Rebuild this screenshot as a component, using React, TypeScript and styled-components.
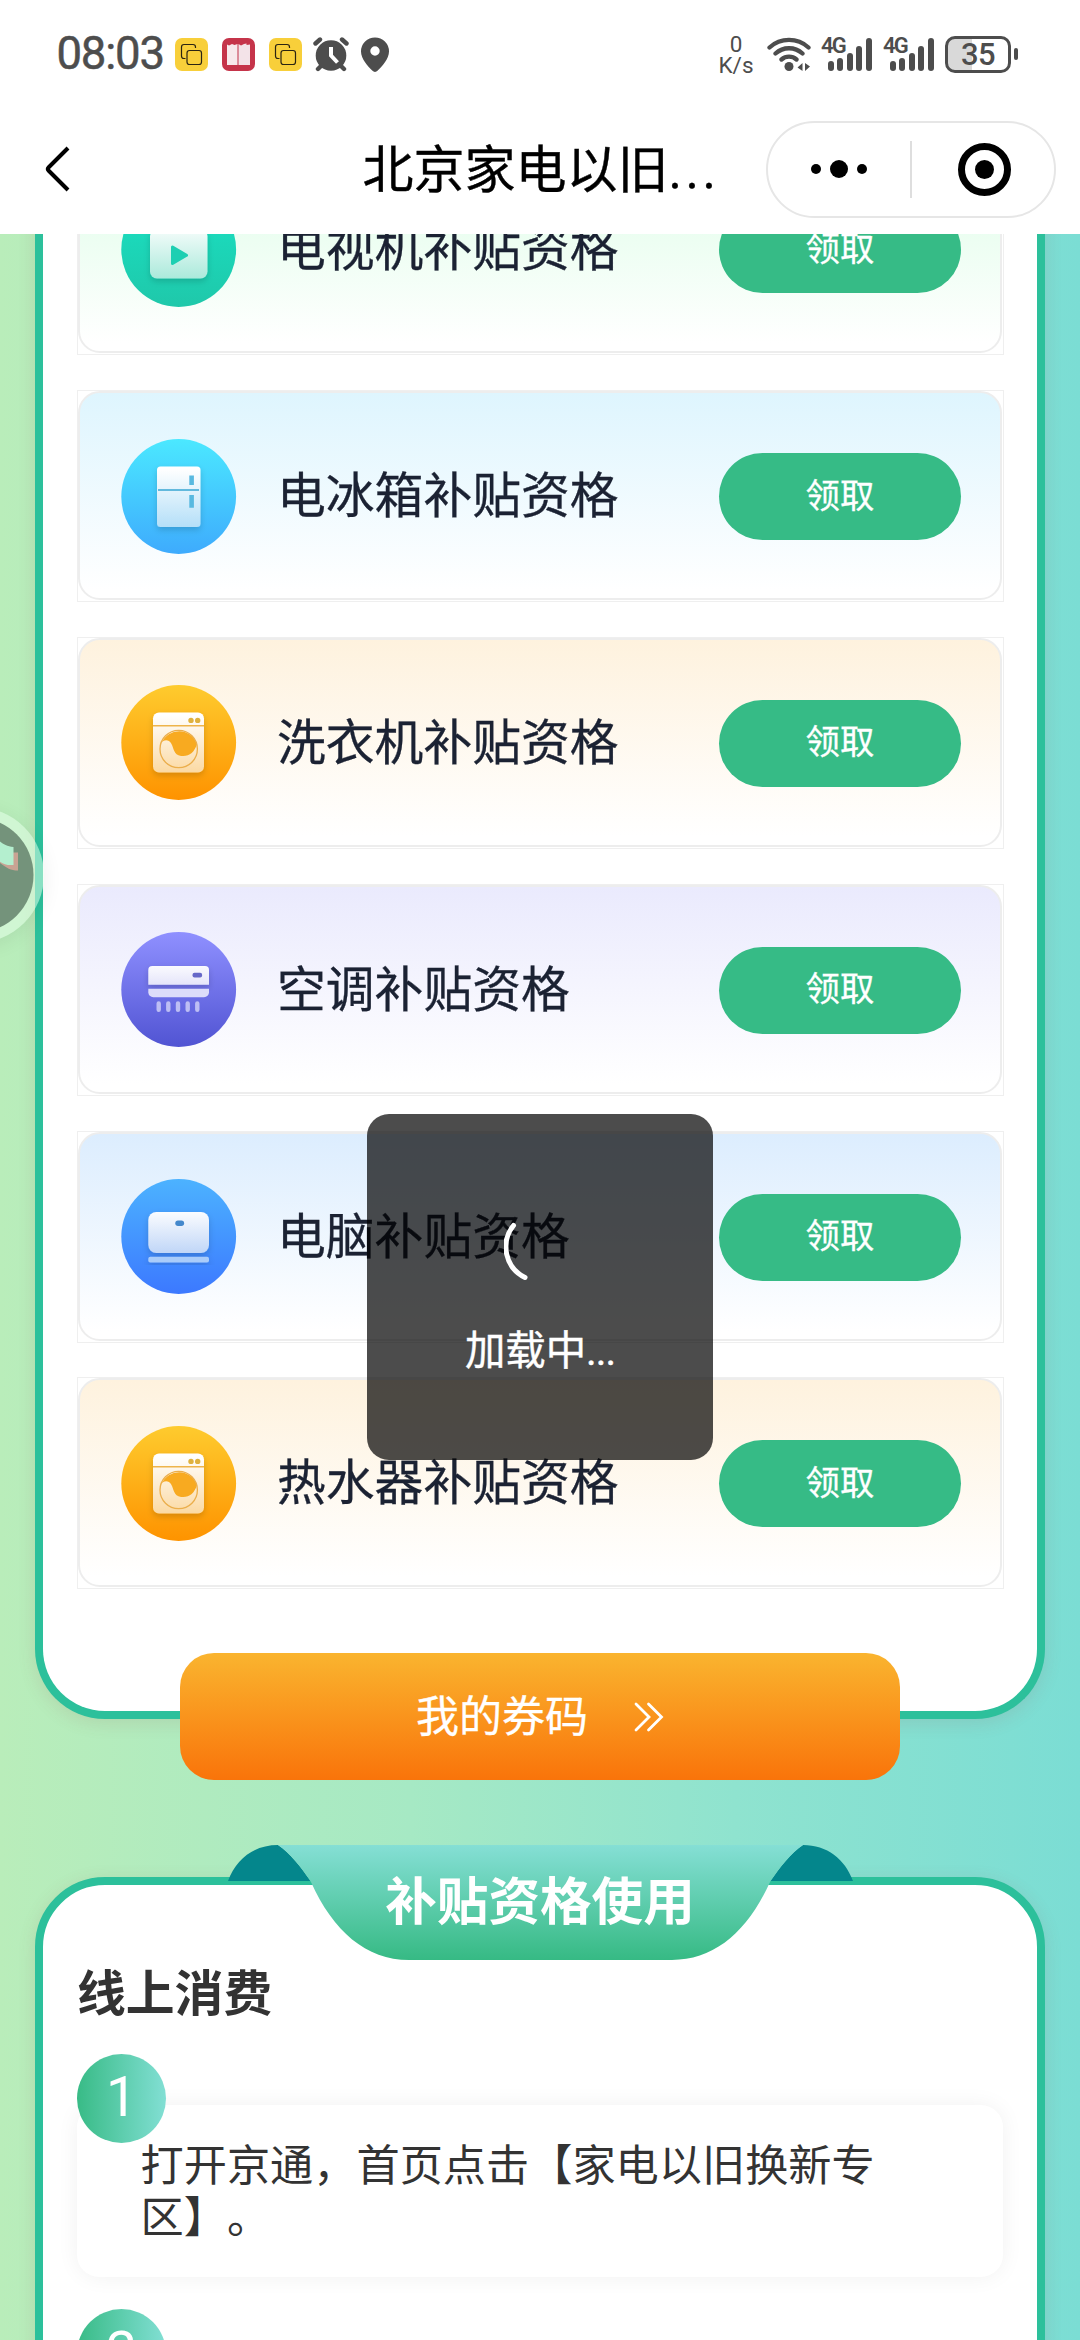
import React from "react";
import styled, { createGlobalStyle } from "styled-components";

const CJK = `"Noto Sans CJK SC", "Noto Sans", sans-serif`;
const LATIN = `Roboto, "Noto Sans CJK SC", sans-serif`;

const GlobalStyle = createGlobalStyle`
  * { box-sizing: border-box; }
  body { margin: 0; background: #fff; }
  svg { display: block; }
`;

const Phone = styled.main`
  position: relative;
  display: flex;
  flex-direction: column;
  width: 1080px;
  height: 2340px;
  overflow: hidden;
  background: #fff;
  font-family: ${CJK};
`;

/* ---------- status bar ---------- */

const StatusBar = styled.div`
  display: flex;
  align-items: center;
  justify-content: space-between;
  height: 108px;
  padding: 0 62px 0 56.5px;
  color: #4d4d4d;
`;

const StatusGroup = styled.div`
  display: flex;
  align-items: center;
`;

const Clock = styled.span`
  width: 118.5px;
  font: 400 45.5px/54px ${LATIN};
  letter-spacing: -1.2px;
  -webkit-text-stroke: 0.5px #4d4d4d;
`;

const AppBadge = styled.span<{ $color: string; $gap: number }>`
  width: 33px;
  height: 33px;
  margin-right: ${(p) => p.$gap}px;
  border-radius: 7px;
  background: ${(p) => p.$color};
`;

const NetSpeed = styled.div`
  display: flex;
  flex-direction: column;
  align-items: center;
  width: 36px;
  margin: 1px 13px 0 0;
  font: 400 22.5px/21px ${LATIN};
`;

const Signal = styled.div`
  display: flex;
  align-items: flex-end;
  width: 62px;
  height: 34px;
`;

const SignalLabel = styled.span`
  align-self: flex-start;
  width: 25px;
  margin: -1px -18px 0 0;
  font: 600 22px/20px ${LATIN};
  letter-spacing: -1.9px;
`;

const SignalBars = styled.div`
  display: flex;
  align-items: flex-end;
  gap: 3.4px;
`;

const SignalBar = styled.i<{ $h: number }>`
  width: 6px;
  height: ${(p) => p.$h}px;
  border-radius: 3px;
  background: #4d4d4d;
`;

const Battery = styled.div`
  display: flex;
  align-items: center;
  gap: 3px;
`;

const BatteryCase = styled.div`
  width: 66px;
  height: 37px;
  border: 3px solid #4d4d4d;
  border-radius: 10px;
  background: linear-gradient(90deg, #d9d9d9 24px, #fff 24px);
  font: 500 31px/32px ${LATIN};
  text-align: center;
  letter-spacing: -0.6px;
`;

const BatteryNub = styled.i`
  width: 4px;
  height: 12px;
  border-radius: 2px;
  background: #4d4d4d;
`;

/* ---------- mini program header ---------- */

const Header = styled.header`
  display: grid;
  grid-template-columns: 316px 450px 290px;
  align-items: center;
  height: 126px;
  padding-bottom: 4px;
`;

const BackButton = styled.button`
  width: 60px;
  margin-left: 40px;
  padding: 0;
  border: 0;
  background: none;
`;

const Title = styled.h1`
  margin: -2px 0 0;
  color: #000;
  text-align: center;
  font: 400 51px/60px ${CJK};
  white-space: nowrap;
  -webkit-text-stroke: 0.4px #000;
`;

const TitleDots = styled.span`
  font-family: ${LATIN};
  letter-spacing: 3.5px;
`;

const Capsule = styled.div`
  display: flex;
  align-items: center;
  width: 290px;
  height: 97px;
  border: 2px solid #e6e6e6;
  border-radius: 49px;
`;

const CapsuleHalf = styled.div`
  flex: 1;
  display: flex;
  align-items: center;
  justify-content: center;
  gap: 9px;
`;

const CapsuleDivider = styled.i`
  width: 2px;
  height: 57px;
  background: #dedede;
`;

const Dot = styled.i<{ $size: number }>`
  width: ${(p) => p.$size}px;
  height: ${(p) => p.$size}px;
  border-radius: 50%;
  background: #000;
`;

const Ring = styled.span`
  display: grid;
  place-items: center;
  width: 53px;
  height: 53px;
  margin-left: 2px;
  border: 7px solid #000;
  border-radius: 50%;
`;

/* ---------- page ---------- */

const Page = styled.section`
  flex: 1;
  display: flex;
  flex-direction: column;
  align-items: center;
  overflow: hidden;
  background: linear-gradient(90deg, #b9edba 0%, #a6e9c4 38%, #8fe3cf 68%, #7bddd4 100%);
`;

const Panel = styled.section`
  flex: none;
  width: 1010px;
  border: 8px solid #2cc09b;
  border-radius: 70px;
  background: #fff;
  box-shadow: 0 4px 18px rgba(150, 80, 80, 0.14);
`;

const CardPanel = styled(Panel)`
  display: flex;
  flex-direction: column;
  align-items: center;
  gap: 34.8px;
  height: 1585px;
  margin-top: -100px;
  border-top: 0;
  border-radius: 0 0 70px 70px;
  padding-top: 9.4px;
`;

const CardFrame = styled.div`
  width: 927px;
  height: 212px;
  padding: 0 1px 1px 0;
  border: 1px solid #efefef;
`;

const Card = styled.article<{ $tint: string }>`
  display: flex;
  align-items: center;
  height: 209px;
  padding: 2px 38.5px 0 41px;
  border: 2px solid #ededed;
  border-radius: 22px;
  background: linear-gradient(180deg, ${(p) => p.$tint} 0%, #fff 96%);
`;

const CardName = styled.h2`
  flex: 1;
  margin: -9px 0 0 40.5px;
  color: #1b2233;
  font: 400 48.8px/60px ${CJK};
  -webkit-text-stroke: 0.3px #1b2233;
`;

const ClaimButton = styled.button`
  width: 242px;
  height: 87px;
  padding: 0 0 8px;
  border: 0;
  border-radius: 44px;
  background: #36bb86;
  color: #fff;
  font: 400 34.4px/50px ${CJK};
  -webkit-text-stroke: 0.3px #fff;
`;

const CouponButton = styled.button`
  z-index: 1;
  flex: none;
  display: flex;
  align-items: center;
  justify-content: center;
  gap: 46px;
  width: 720px;
  height: 127px;
  margin-top: -66px;
  padding: 0;
  border: 0;
  border-radius: 34px;
  background: linear-gradient(180deg, #fab42f 0%, #f9740a 100%);
  color: #fff;
`;

const CouponLabel = styled.span`
  margin-top: -7px;
  font: 400 43px/60px ${CJK};
  -webkit-text-stroke: 0.3px #fff;
`;

const UsagePanel = styled(Panel)`
  height: 600px;
  margin-top: 97px;
  padding: 0 34px;
`;

const Ribbon = styled.div`
  position: relative;
  width: 625px;
  height: 115px;
  margin: -40px auto 0;
`;

const RibbonShape = styled.svg`
  position: absolute;
  inset: 0;
`;

const RibbonTitle = styled.h2`
  position: relative;
  margin: 0;
  padding-top: 17px;
  color: #fff;
  text-align: center;
  font: 700 51.6px/72px ${CJK};
`;

const SectionTitle = styled.h3`
  margin: -1px 0 0;
  height: 95px;
  color: #333;
  font: 700 48.8px/62px ${CJK};
`;

const Step = styled.div`
  height: 255px;
`;

const StepNumber = styled.div`
  position: relative;
  z-index: 1;
  width: 89px;
  height: 89px;
  border-radius: 50%;
  background: linear-gradient(90deg, #38bb86 0%, #82dfd4 100%);
  color: #fff;
  text-align: center;
  font: 400 55px/87px ${LATIN};
`;

const StepCard = styled.p`
  height: 172px;
  margin: -38px 0 0;
  padding: 32px 110px 0 63.5px;
  border-radius: 22px;
  background: #fff;
  box-shadow: 0 0 22px rgba(0, 0, 0, 0.06);
  color: #333;
  font: 400 43.2px/51.5px ${CJK};
  text-spacing-trim: space-all;
`;

/* ---------- overlays ---------- */

const Toast = styled.div`
  position: absolute;
  z-index: 5;
  top: 1114px;
  left: 367px;
  display: flex;
  flex-direction: column;
  align-items: center;
  width: 346px;
  height: 346px;
  padding-top: 97px;
  border-radius: 22px;
  background: rgba(0, 0, 0, 0.7);
  color: #fff;
`;

const ToastText = styled.span`
  margin-top: 35px;
  font: 400 40.4px/60px ${CJK};
  -webkit-text-stroke: 0.4px #fff;
`;

const ToastDots = styled.span`
  font-family: ${LATIN};
  letter-spacing: -1px;
`;

const FloatBubble = styled.div`
  position: absolute;
  z-index: 4;
  top: 807px;
  left: -92px;
  width: 136px;
  height: 136px;
  padding: 10px;
  border-radius: 50%;
  background: rgba(232, 255, 236, 0.5);
  box-shadow: 0 4px 20px rgba(0, 0, 0, 0.07);
`;

/* ---------- appliance icons ---------- */

type IconProps = { id: string; from: string; to: string; tint: string; children: React.ReactNode };

const ApplianceIcon = ({ id, from, to, tint, children }: IconProps) => (
  <svg width="116" height="116" viewBox="0 0 116 116">
    <defs>
      <linearGradient id={`${id}-disc`} x1="0" y1="0" x2="0" y2="1">
        <stop offset="0" stopColor={from} />
        <stop offset="1" stopColor={to} />
      </linearGradient>
      <linearGradient id={`${id}-body`} gradientUnits="userSpaceOnUse" x1="0" y1="30" x2="0" y2="88">
        <stop offset="0" stopColor="#fff" />
        <stop offset="1" stopColor={tint} />
      </linearGradient>
      <filter id={`${id}-shadow`} x="-30%" y="-30%" width="160%" height="160%">
        <feDropShadow dx="0" dy="3" stdDeviation="3" floodColor="#000" floodOpacity="0.16" />
      </filter>
    </defs>
    <circle cx="57.7" cy="57.5" r="57.4" fill={`url(#${id}-disc)`} />
    {children}
  </svg>
);

const TvIcon = () => (
  <ApplianceIcon id="tv" from="#19e2c4" to="#1fc8aa" tint="#a8e9da">
    <rect x="29" y="37" width="57.5" height="49.5" rx="7" fill="url(#tv-body)" filter="url(#tv-shadow)" />
    <path d="M51.5 55v16.5l14-8.2z" fill="#1ecfb2" stroke="#1ecfb2" strokeWidth="3" strokeLinejoin="round" />
  </ApplianceIcon>
);

const FridgeIcon = () => (
  <ApplianceIcon id="fridge" from="#4be8ff" to="#3eabfd" tint="#b4dff8">
    <rect x="36" y="27.5" width="43.5" height="60.5" rx="3.5" fill="url(#fridge-body)" filter="url(#fridge-shadow)" />
    <path d="M37 51h41" stroke="#62b9dd" strokeWidth="1.8" />
    <path d="M70.6 36.5v9.5M70.6 56v12.8" stroke="#58b9e0" strokeWidth="4.6" />
  </ApplianceIcon>
);

const WasherIcon = ({ id }: { id: string }) => (
  <ApplianceIcon id={id} from="#fecb2e" to="#fe9300" tint="#fbd9a2">
    <rect x="32" y="27.5" width="51" height="60" rx="6" fill={`url(#${id}-body)`} filter={`url(#${id}-shadow)`} />
    <path d="M32 40.8h51" stroke="#eeb44b" strokeWidth="1.4" />
    <circle cx="70" cy="35.4" r="2.7" fill="#dfb13e" />
    <circle cx="76.7" cy="35.4" r="2.7" fill="#dfb13e" />
    <path
      d="M40.6 57.8C43 54.2 48 54.6 50.2 58.4C53 63 52.4 69.6 60 70.9C67.6 72 73.5 67.5 76 59A19 19 0 0 0 40.6 57.8Z"
      fill="#f8aa20"
    />
    <circle cx="57.7" cy="64" r="18.7" fill="none" stroke="#ebae4b" strokeWidth="1.3" />
  </ApplianceIcon>
);

const AirconIcon = () => (
  <ApplianceIcon id="ac" from="#8f90ff" to="#5154d3" tint="#bcbcf2">
    <path d="M31.3 34H84a4 4 0 0 1 4 4v14.7H27.3V38a4 4 0 0 1 4-4z" fill="url(#ac-body)" filter="url(#ac-shadow)" />
    <path d="M27.3 56.7H88v3.6a5 5 0 0 1-5 5H32.3a5 5 0 0 1-5-5z" fill="#dcdcfa" />
    <rect x="71.5" y="40.8" width="9.6" height="4.6" rx="2" fill="#6668c8" />
    <path
      d="M37.7 71.5v6.2M47.3 71.5v6.2M57 71.5v6.2M66.7 71.5v6.2M76.3 71.5v6.2"
      stroke="#bdbef4"
      strokeWidth="4.4"
      strokeLinecap="round"
    />
  </ApplianceIcon>
);

const ComputerIcon = () => (
  <ApplianceIcon id="pc" from="#4cb2ff" to="#3c79ff" tint="#acc9f5">
    <rect x="27.3" y="33" width="60.7" height="41" rx="8" fill="url(#pc-body)" filter="url(#pc-shadow)" />
    <rect x="54.3" y="41.6" width="8.8" height="5.4" rx="2.7" fill="#4488cc" />
    <rect x="27.3" y="77.8" width="60.7" height="5.6" rx="2" fill="#a9ccfa" filter="url(#pc-shadow)" />
  </ApplianceIcon>
);

/* ---------- data ---------- */

const appliances = [
  { name: "电视机补贴资格", tint: "#dcfde6", icon: <TvIcon /> },
  { name: "电冰箱补贴资格", tint: "#def5fe", icon: <FridgeIcon /> },
  { name: "洗衣机补贴资格", tint: "#fef2de", icon: <WasherIcon id="washer" /> },
  { name: "空调补贴资格", tint: "#eaeafd", icon: <AirconIcon /> },
  { name: "电脑补贴资格", tint: "#dcedfe", icon: <ComputerIcon /> },
  { name: "热水器补贴资格", tint: "#fef2de", icon: <WasherIcon id="heater" /> },
];

const CopyBadge = ({ gap }: { gap: number }) => (
  <AppBadge $color="#f8cf3a" $gap={gap}>
    <svg width="33" height="33" viewBox="0 0 33 33" fill="none" stroke="#2b2412" strokeWidth="1.2">
      <path d="M10.5 20.5H9A2.5 2.5 0 0 1 6.5 18V9A2.5 2.5 0 0 1 9 6.5h9A2.5 2.5 0 0 1 20.5 9v1" />
      <rect x="12" y="12.5" width="14.5" height="14" rx="2.5" />
    </svg>
  </AppBadge>
);

const SignalMeter = () => (
  <Signal>
    <SignalLabel>4G</SignalLabel>
    <SignalBars>
      {[10, 13, 18, 25, 33].map((h) => (
        <SignalBar key={h} $h={h} />
      ))}
    </SignalBars>
  </Signal>
);

export default function App() {
  return (
    <Phone>
      <GlobalStyle />
      <StatusBar>
        <StatusGroup>
          <Clock>08:03</Clock>
          <CopyBadge gap={14} />
          <AppBadge $color="#c5344a" $gap={14}>
            <svg width="33" height="33" viewBox="0 0 33 33">
              <path d="M5 6.5l2 1 3-1.5 2.500 1L15.500 6v21H5z" fill="#f7e9ec" />
              <path d="M16.500 6l2.500 1.500L22 6l2.500-.5V7l3.500-.5V27H16.500z" fill="#f3e3e8" />
              <path d="M15.500 9h1.200v18h-1.200z" fill="#d98b9a" />
            </svg>
          </AppBadge>
          <CopyBadge gap={11} />
          <svg width="36" height="35" viewBox="0 0 36 35">
            <g stroke="#4d4d4d" strokeWidth="4.4" strokeLinecap="round">
              <path d="M2.5 6.5L7 2.5M33.500 6.5L29 2.5M9 28l-4 4M27 28l4 4" />
            </g>
            <circle cx="18" cy="18.5" r="15.3" fill="#4d4d4d" />
            <path d="M18 10v8.500l6.500 7" fill="none" stroke="#fff" strokeWidth="4" />
          </svg>
          <svg width="40" height="35" viewBox="0 0 40 35">
            <path
              fillRule="evenodd"
              d="M26 0.500a14 14 0 0 1 14 14C40 22 33 29.500 28.500 33.800a3.400 3.400 0 0 1-5 0C19 29.500 12 22 12 14.500a14 14 0 0 1 14-14zM26 9.300a4.700 4.700 0 1 0 0 9.400 4.700 4.700 0 0 0 0-9.400z"
              fill="#4d4d4d"
            />
          </svg>
        </StatusGroup>
        <StatusGroup>
          <NetSpeed>
            <span>0</span>
            <span>K/s</span>
          </NetSpeed>
          <svg width="54" height="36" viewBox="0 0 54 36">
            <g fill="none" stroke="#4d4d4d" strokeWidth="4.3" strokeLinecap="round">
              <path d="M2.500 11.500a29 29 0 0 1 39 0M8.500 17.500a20 20 0 0 1 27 0M14.500 23.500a11.500 11.500 0 0 1 15 0" />
            </g>
            <circle cx="22" cy="30.5" r="4.5" fill="#4d4d4d" />
            <path d="M35.500 27v8l-5-3.500zM38 27v8l5-4.500z" fill="#4d4d4d" />
          </svg>
          <SignalMeter />
          <SignalMeter />
          <Battery>
            <BatteryCase>35</BatteryCase>
            <BatteryNub />
          </Battery>
        </StatusGroup>
      </StatusBar>

      <Header>
        <BackButton aria-label="back">
          <svg width="60" height="50" viewBox="0 0 60 50">
            <path d="M28 4L8.500 23.500q-1.500 1.500 0 3L28 46" fill="none" stroke="#000" strokeWidth="4" />
          </svg>
        </BackButton>
        <Title>
          北京家电以旧<TitleDots>...</TitleDots>
        </Title>
        <Capsule>
          <CapsuleHalf>
            <Dot $size={10} />
            <Dot $size={18} />
            <Dot $size={10} />
          </CapsuleHalf>
          <CapsuleDivider />
          <CapsuleHalf>
            <Ring>
              <Dot $size={19} />
            </Ring>
          </CapsuleHalf>
        </Capsule>
      </Header>

      <Page>
        <CardPanel>
          {appliances.map((item) => (
            <CardFrame key={item.name}>
              <Card $tint={item.tint}>
                {item.icon}
                <CardName>{item.name}</CardName>
                <ClaimButton>领取</ClaimButton>
              </Card>
            </CardFrame>
          ))}
        </CardPanel>

        <CouponButton>
          <CouponLabel>我的券码</CouponLabel>
          <svg width="30" height="32" viewBox="0 0 30 32" fill="none" stroke="#fff" strokeWidth="2.8" strokeLinecap="round">
            <path d="M2 3l13 13L2 29M14.500 3l13 13-13 13" />
          </svg>
        </CouponButton>

        <UsagePanel>
          <Ribbon>
            <RibbonShape width="625" height="115" viewBox="0 0 625 115">
              <defs>
                <linearGradient id="ribbon" x1="0" y1="0" x2="0" y2="1">
                  <stop offset="0" stopColor="#85dfd5" />
                  <stop offset="1" stopColor="#36ba84" />
                </linearGradient>
              </defs>
              <path
                d="M0 36C8 14 26 0 50 0C62 8 73 22 82.500 36zM625 36C617 14 599 0 575 0C563 8 552 22 542.500 36z"
                fill="#04868c"
              />
              <path
                d="M50 0C62 8 73 22 83 37C105 86 138 115 181 115H444C487 115 520 86 542 37C552 22 563 8 575 0z"
                fill="url(#ribbon)"
              />
            </RibbonShape>
            <RibbonTitle>补贴资格使用</RibbonTitle>
          </Ribbon>
          <SectionTitle>线上消费</SectionTitle>
          <Step>
            <StepNumber>1</StepNumber>
            <StepCard>打开京通，首页点击【家电以旧换新专区】。</StepCard>
          </Step>
          <Step>
            <StepNumber>2</StepNumber>
          </Step>
        </UsagePanel>
      </Page>

      <FloatBubble>
        <svg width="116" height="116" viewBox="0 0 116 116">
          <circle cx="58" cy="58" r="57.5" fill="#74937b" />
          <path d="M80 27l14 8.500h6v18c-8 0-12-3-20-9z" fill="#c9a393" />
          <path d="M80 23c4 3 8 6.500 15.500 7V48c-7 .5-11-1-15.500-5z" fill="#b4efcf" />
        </svg>
      </FloatBubble>

      <Toast>
        <svg width="72" height="72" viewBox="0 0 72 72">
          <path d="M9.500 14.500A34 34 0 0 0 21 66.500" fill="none" stroke="#fff" strokeWidth="5" strokeLinecap="round" />
        </svg>
        <ToastText>
          加载中<ToastDots>...</ToastDots>
        </ToastText>
      </Toast>
    </Phone>
  );
}
